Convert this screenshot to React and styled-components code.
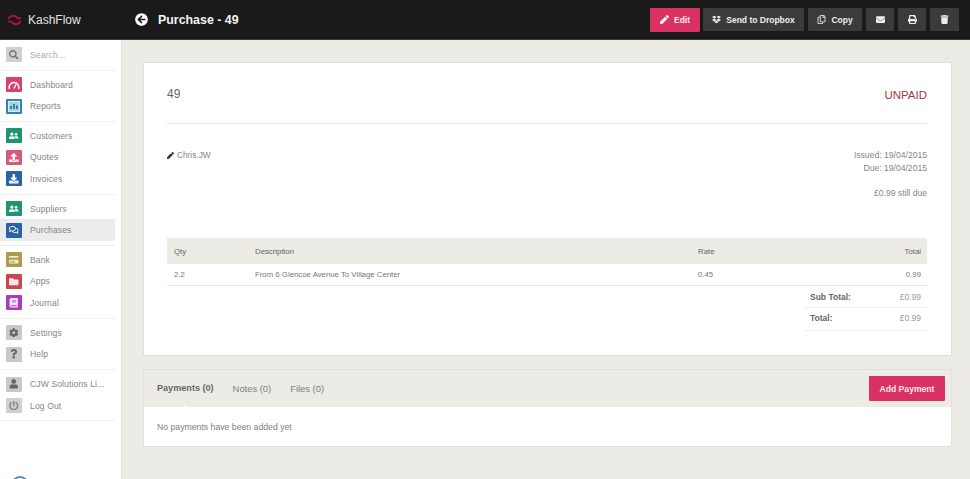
import React from "react";
import styled, { createGlobalStyle } from "styled-components";
import {
  FaArrowCircleLeft,
  FaBook,
  FaCog,
  FaRegCopy,
  FaCreditCard,
  FaDownload,
  FaDropbox,
  FaEnvelope,
  FaFolder,
  FaPen,
  FaPowerOff,
  FaPrint,
  FaQuestion,
  FaSearch,
  FaTrash,
  FaUpload,
  FaUser,
  FaUserFriends,
  FaRegComments,
} from "react-icons/fa";

const GlobalStyle = createGlobalStyle`
  html, body {
    margin: 0;
    height: 100%;
    overflow: hidden;
    background: #ecebe5;
    font-family: "Liberation Sans", Arial, sans-serif;
  }
`;

const GaugeIcon = () => (
  <svg width="12" height="10" viewBox="0 0 12 10">
    <path d="M1.5 9A4.8 4.8 0 1 1 10.5 9" fill="none" stroke="#fff" strokeWidth="1.6" />
    <path d="M6 8.5 8 4.5" stroke="#fff" strokeWidth="1.4" />
  </svg>
);

const ReportIcon = () => (
  <svg width="12" height="11" viewBox="0 0 12 11">
    <rect x="0.5" y="0.5" width="11" height="10" fill="#a9d3e2" stroke="#d7edf4" />
    <path d="M3 8V5M6 8V3M9 8V4.5" stroke="#1f6f8c" strokeWidth="1.6" />
  </svg>
);

const navGroups = [
  [{ label: "Search...", icon: <FaSearch />, color: "#d0d0ce", ink: "#777", faint: true }],
  [
    { label: "Dashboard", icon: <GaugeIcon />, color: "#d9406e" },
    { label: "Reports", icon: <ReportIcon />, color: "#2f87a5" },
  ],
  [
    { label: "Customers", icon: <FaUserFriends />, color: "#21936f" },
    { label: "Quotes", icon: <FaUpload />, color: "#d65a78" },
    { label: "Invoices", icon: <FaDownload />, color: "#2a62a3" },
  ],
  [
    { label: "Suppliers", icon: <FaUserFriends />, color: "#21936f" },
    { label: "Purchases", icon: <FaRegComments />, color: "#2a62a3", active: true },
  ],
  [
    { label: "Bank", icon: <FaCreditCard />, color: "#ad9a4e", ink: "#f3eccb" },
    { label: "Apps", icon: <FaFolder />, color: "#c9474f", ink: "#fbe9ea" },
    { label: "Journal", icon: <FaBook />, color: "#a93bbd", ink: "#f5e3f8" },
  ],
  [
    { label: "Settings", icon: <FaCog />, color: "#c9c9c7", ink: "#666" },
    { label: "Help", icon: <FaQuestion />, color: "#c9c9c7", ink: "#666" },
  ],
  [
    { label: "CJW Solutions Li...", icon: <FaUser />, color: "#c9c9c7", ink: "#666" },
    { label: "Log Out", icon: <FaPowerOff />, color: "#d0d0ce", ink: "#888" },
  ],
];

export default function App() {
  return (
    <>
      <GlobalStyle />
      <Page>
        <TopBar>
          <Brand>
            <BrandMark viewBox="0 0 16 12">
              <path d="M1.5 5C3 1 8 0.5 10 3c1 1.2 3 1.6 4.5 0.8" fill="none" stroke="#b8124c" strokeWidth="2" />
              <path d="M1.5 8C3 7.2 5 7.6 6 9c2 2.5 7 2 8.5-2" fill="none" stroke="#b8124c" strokeWidth="2" />
            </BrandMark>
            KashFlow
          </Brand>
          <TitleArea>
            <FaArrowCircleLeft />
            Purchase - 49
          </TitleArea>
          <Actions>
            <TopButton $primary $width="50px">
              <FaPen />
              Edit
            </TopButton>
            <TopButton $width="101px">
              <FaDropbox />
              Send to Dropbox
            </TopButton>
            <TopButton $width="54px">
              <FaRegCopy />
              Copy
            </TopButton>
            <TopButton $width="28px">
              <FaEnvelope />
            </TopButton>
            <TopButton $width="28px">
              <FaPrint />
            </TopButton>
            <TopButton $width="29px">
              <FaTrash />
            </TopButton>
          </Actions>
        </TopBar>
        <Body>
          <Sidebar>
            {navGroups.map((group, i) => (
              <NavGroup key={i}>
                {group.map((item) => (
                  <NavRow key={item.label} $active={item.active}>
                    <NavIcon $color={item.color} $ink={item.ink}>
                      {item.icon}
                    </NavIcon>
                    <NavLabel $faint={item.faint}>{item.label}</NavLabel>
                  </NavRow>
                ))}
              </NavGroup>
            ))}
            <SealClip>
              <svg width="18" height="18" viewBox="0 0 18 18">
                <circle cx="9" cy="9" r="8" fill="none" stroke="#5f86b3" strokeWidth="2" />
              </svg>
            </SealClip>
          </Sidebar>
          <Main>
            <Card>
              <CardHead>
                <Reference>49</Reference>
                <Status>UNPAID</Status>
              </CardHead>
              <Details>
                <Supplier>
                  <FaPen />
                  Chris.JW
                </Supplier>
                <Dates>
                  <div>Issued: 19/04/2015</div>
                  <div>Due: 19/04/2015</div>
                  <Due>£0.99 still due</Due>
                </Dates>
              </Details>
              <TableHead>
                <span>Qty</span>
                <span>Description</span>
                <span>Rate</span>
                <TotalCell>Total</TotalCell>
              </TableHead>
              <TableRow>
                <span>2.2</span>
                <span>From 6 Glencoe Avenue To Village Center</span>
                <span>0.45</span>
                <TotalCell>0.99</TotalCell>
              </TableRow>
              <Totals>
                <TotalLine>
                  <strong>Sub Total:</strong>
                  <span>£0.99</span>
                </TotalLine>
                <TotalLine>
                  <strong>Total:</strong>
                  <span>£0.99</span>
                </TotalLine>
              </Totals>
            </Card>
            <TabPanel>
              <TabBar>
                <Tabs>
                  <Tab $active>Payments (0)</Tab>
                  <Tab>Notes (0)</Tab>
                  <Tab>Files (0)</Tab>
                </Tabs>
                <AddButton>Add Payment</AddButton>
              </TabBar>
              <TabBody>No payments have been added yet</TabBody>
            </TabPanel>
          </Main>
        </Body>
      </Page>
    </>
  );
}

const Page = styled.div`
  width: 970px;
  height: 479px;
  display: flex;
  flex-direction: column;
  overflow: hidden;
`;

const TopBar = styled.header`
  height: 40px;
  flex: none;
  display: flex;
  align-items: center;
  background: #1a1a1a;
  border-bottom: 1px solid #3a3a38;
  box-sizing: border-box;
  padding-right: 11px;
`;

const Brand = styled.div`
  width: 135px;
  display: flex;
  align-items: center;
  gap: 6px;
  padding-left: 7px;
  box-sizing: border-box;
  color: #e4e4e4;
  font-size: 12px;
`;

const BrandMark = styled.svg`
  width: 15px;
  height: 12px;
`;

const TitleArea = styled.div`
  display: flex;
  align-items: center;
  gap: 10px;
  color: #f4f4f4;
  font-size: 12.4px;
  font-weight: bold;

  svg {
    font-size: 13px;
    color: #fff;
  }
`;

const Actions = styled.div`
  margin-left: auto;
  display: flex;
  align-items: center;
  gap: 4px;
`;

const TopButton = styled.div`
  height: ${(p) => (p.$primary ? "24px" : "23px")};
  margin-right: ${(p) => (p.$primary ? "-1px" : "0")};
  width: ${(p) => p.$width};
  display: flex;
  align-items: center;
  justify-content: center;
  gap: 5px;
  box-sizing: border-box;
  border-radius: 1px;
  background: ${(p) => (p.$primary ? "#d93163" : "#3b3b3b")};
  color: #eee;
  font-size: 8.5px;
  font-weight: bold;
  white-space: nowrap;

  svg {
    font-size: 9px;
  }
`;

const Body = styled.div`
  flex: 1;
  display: flex;
  min-height: 0;
`;

const Sidebar = styled.nav`
  position: relative;
  width: 122px;
  flex: none;
  background: #fff;
  border-right: 1px solid #e2e1da;
  box-sizing: border-box;
  padding-top: 4px;
  overflow: hidden;
`;

const NavGroup = styled.div`
  width: 115px;
  padding: 0 0 4px;
  margin-bottom: 3.3px;
  border-bottom: 1px solid #f0f0ee;
`;

const NavRow = styled.div`
  height: 21.5px;
  display: flex;
  align-items: center;
  gap: 8px;
  padding-left: 6px;
  background: ${(p) => (p.$active ? "#ececec" : "transparent")};
`;

const NavIcon = styled.span`
  width: 16px;
  height: 15px;
  flex: none;
  display: flex;
  align-items: center;
  justify-content: center;
  border-radius: 1px;
  background: ${(p) => p.$color};
  color: ${(p) => p.$ink || "#fff"};
  font-size: 9.5px;
`;

const NavLabel = styled.span`
  font-size: 8.6px;
  letter-spacing: 0.1px;
  color: ${(p) => (p.$faint ? "#aaa" : "#858585")};
  white-space: nowrap;
`;

const SealClip = styled.div`
  position: absolute;
  left: 11px;
  bottom: -15px;
  line-height: 0;
`;

const Main = styled.main`
  flex: 1;
  padding: 22px 18px 0 21px;
  display: flex;
  flex-direction: column;
  gap: 13px;
`;

const Card = styled.section`
  height: 294px;
  box-sizing: border-box;
  background: #fff;
  border: 1px solid #dfded7;
  padding: 0 24px 0 23px;
`;

const CardHead = styled.div`
  height: 38px;
  display: flex;
  align-items: flex-end;
  justify-content: space-between;
  padding-bottom: 22px;
  border-bottom: 1px solid #e4e4e1;
`;

const Reference = styled.span`
  font-size: 12px;
  color: #666;
`;

const Status = styled.span`
  font-size: 11.5px;
  color: #a5393f;
`;

const Details = styled.div`
  height: 114px;
  display: flex;
  justify-content: space-between;
  padding-top: 25px;
  box-sizing: border-box;
  font-size: 8.6px;
  color: #858585;
`;

const Supplier = styled.div`
  display: flex;
  align-items: flex-start;
  gap: 3px;
  margin-top: 1px;
  line-height: 11px;
  font-size: 8.3px;

  svg {
    color: #333;
    font-size: 7px;
    margin-top: 2px;
  }
`;

const Dates = styled.div`
  text-align: right;
  line-height: 13px;
`;

const Due = styled.div`
  margin-top: 12px;
`;

const columns = `
  display: grid;
  grid-template-columns: 81px 443px 1fr auto;
  align-items: center;
  padding: 0 6px 0 7px;
  font-size: 7.8px;
`;

const TableHead = styled.div`
  ${columns}
  height: 26px;
  background: #ecebe5;
  color: #666;
`;

const TableRow = styled.div`
  ${columns}
  height: 22px;
  box-sizing: border-box;
  border-bottom: 1px solid #e4e4e1;
  color: #777;
`;

const TotalCell = styled.span`
  text-align: right;
`;

const Totals = styled.div`
  width: 123px;
  margin-left: auto;
`;

const TotalLine = styled.div`
  height: 22px;
  box-sizing: border-box;
  display: flex;
  align-items: center;
  justify-content: space-between;
  padding: 0 6px;
  border-bottom: 1px solid #f0f0ee;
  font-size: 8.5px;
  color: #999;

  &:last-child {
    height: 23px;
    padding-bottom: 3px;
  }

  strong {
    color: #666;
  }
`;

const TabPanel = styled.section`
  height: 78px;
  box-sizing: border-box;
  border: 1px solid #e2e1da;
  display: flex;
  flex-direction: column;
`;

const TabBar = styled.div`
  height: 37px;
  flex: none;
  display: flex;
  align-items: center;
  justify-content: space-between;
  padding: 0 6px 0 13px;
`;

const Tabs = styled.div`
  display: flex;
  gap: 19px;
`;

const Tab = styled.span`
  position: relative;
  font-size: ${(p) => (p.$active ? "9.1px" : "9.4px")};
  font-weight: ${(p) => (p.$active ? "bold" : "normal")};
  color: ${(p) => (p.$active ? "#666" : "#808080")};

  &::after {
    content: "";
    display: ${(p) => (p.$active ? "block" : "none")};
    position: absolute;
    left: 24px;
    bottom: -15px;
    border: 4px solid transparent;
    border-bottom-color: #fff;
    border-top: 0;
  }
`;

const AddButton = styled.div`
  width: 76px;
  height: 25px;
  display: flex;
  align-items: center;
  justify-content: center;
  border-radius: 1px;
  background: #d93163;
  color: #f6e6ec;
  font-size: 8.6px;
  font-weight: bold;
`;

const TabBody = styled.div`
  flex: 1;
  display: flex;
  align-items: center;
  padding-left: 13px;
  background: #fff;
  color: #808080;
  font-size: 8.7px;
`;
